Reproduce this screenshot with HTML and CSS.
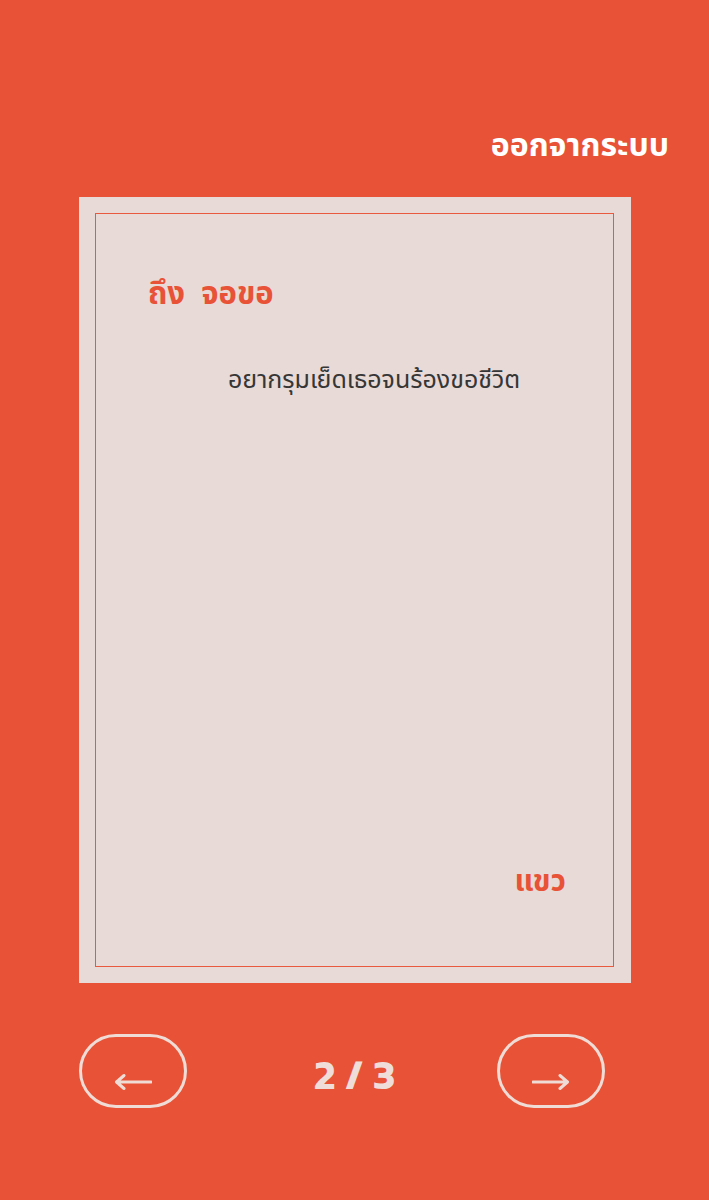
FILE: index.html
```html
<!DOCTYPE html>
<html lang="th">
<head>
<meta charset="utf-8">
<link rel="stylesheet" href="styles.css">
</head>
<body>
<div class="page">
  <header class="top">
    <a class="logout">ออกจากระบบ</a>
  </header>
  <main class="card">
    <div class="letter">
      <h1 class="to">ถึง&nbsp;&nbsp;จอขอ</h1>
      <p class="msg">อยากรุมเย็ดเธอจนร้องขอชีวิต</p>
      <div class="spacer"></div>
      <p class="from">แขว</p>
    </div>
  </main>
  <nav class="pager">
    <button class="nav-btn prev" type="button" aria-label="ก่อนหน้า">
      <svg class="arrow" width="38" height="16" viewBox="0 0 38 16"><path d="M37 8H3M10 1.5L2.5 8L10 14.5" fill="none" stroke="#f0dcd6" stroke-width="3" stroke-linecap="round" stroke-linejoin="round"/></svg>
    </button>
    <span class="count">2 / 3</span>
    <button class="nav-btn next" type="button" aria-label="ถัดไป">
      <svg class="arrow" width="38" height="16" viewBox="0 0 38 16"><path d="M1 8H35M28 1.5L35.5 8L28 14.5" fill="none" stroke="#f0dcd6" stroke-width="3" stroke-linecap="round" stroke-linejoin="round"/></svg>
    </button>
  </nav>
</div>
</body>
</html>
```
FILE: styles.css
```css
html, body {
  margin: 0;
  padding: 0;
  background: #e85236;
}
body {
  font-family: "Noto Sans Thai", "Noto Sans", sans-serif;
}
.page {
  width: 709px;
  height: 1200px;
  display: flex;
  flex-direction: column;
  box-sizing: border-box;
}
.top {
  height: 197px;
  display: flex;
  justify-content: flex-end;
  align-items: flex-start;
  padding: 124px 40px 0 0;
  box-sizing: border-box;
}
.logout {
  color: #fff;
  font-size: 32px;
  font-weight: 700;
  line-height: 44px;
}
.card {
  margin-left: 79px;
  width: 552px;
  height: 786px;
  background: #e8dad6;
  padding: 16px 17px 16px 16px;
  box-sizing: border-box;
}
.letter {
  height: 100%;
  border: 1px solid #e8593d;
  box-sizing: border-box;
  display: flex;
  flex-direction: column;
  padding: 56px 47px 62px 52px;
}
.to {
  margin: 0;
  color: #e85236;
  font-size: 31px;
  font-weight: 700;
  line-height: 50px;
}
.msg {
  margin: 42px 0 0 80px;
  color: #363636;
  font-size: 25px;
  line-height: 36px;
}
.spacer {
  flex: 1;
}
.from {
  margin: 0;
  text-align: right;
  color: #e85236;
  font-size: 30px;
  font-weight: 700;
  line-height: 44px;
}
.pager {
  margin-top: 51px;
  padding: 0 79px;
  display: grid;
  grid-template-columns: 1fr auto 1fr;
  align-items: center;
}
.nav-btn {
  width: 108px;
  height: 74px;
  border: 3px solid #f0dcd6;
  border-radius: 37px;
  background: transparent;
  padding: 22px 0 0;
  display: flex;
  justify-content: center;
  align-items: center;
  cursor: pointer;
}
.prev {
  justify-self: start;
}
.next {
  justify-self: end;
  margin-right: 25px;
}
.arrow {
  display: block;
}
.count {
  color: #eeddd8;
  font-family: "Kanit", "Noto Sans Thai", sans-serif;
  font-size: 42px;
  font-weight: 600;
  padding-top: 6px;
}
```
